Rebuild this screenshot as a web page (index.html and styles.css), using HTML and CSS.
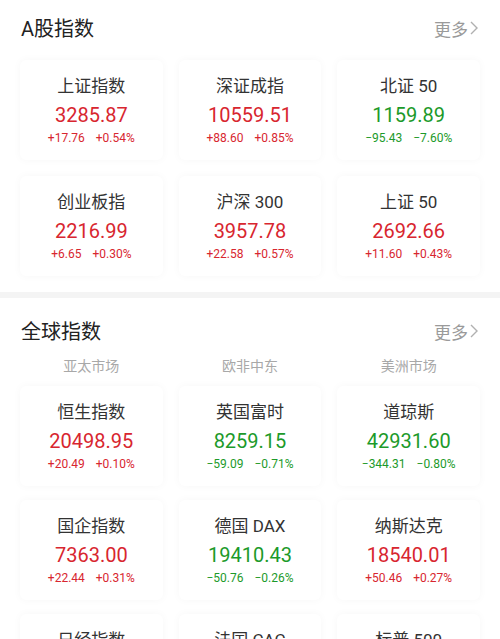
FILE: index.html
```html
<!DOCTYPE html>
<html lang="zh-CN">
<head>
<meta charset="utf-8">
<title>指数</title>
<link rel="stylesheet" href="styles.css">
</head>
<body>
<section class="block">
  <div class="head">
    <h2 class="title">A股指数</h2>
    <a class="more">更多<svg class="chev" viewBox="0 0 8 14" width="8" height="14"><path d="M1 1 L7 7 L1 13" fill="none" stroke="#b0b0b0" stroke-width="1.4"/></svg></a>
  </div>
  <div class="grid">
    <div class="card up"><div class="name">上证指数</div><div class="val">3285.87</div><div class="chg"><span>+17.76</span><span>+0.54%</span></div></div>
    <div class="card up"><div class="name">深证成指</div><div class="val">10559.51</div><div class="chg"><span>+88.60</span><span>+0.85%</span></div></div>
    <div class="card down"><div class="name">北证 50</div><div class="val">1159.89</div><div class="chg"><span>−95.43</span><span>−7.60%</span></div></div>
    <div class="card up"><div class="name">创业板指</div><div class="val">2216.99</div><div class="chg"><span>+6.65</span><span>+0.30%</span></div></div>
    <div class="card up"><div class="name">沪深 300</div><div class="val">3957.78</div><div class="chg"><span>+22.58</span><span>+0.57%</span></div></div>
    <div class="card up"><div class="name">上证 50</div><div class="val">2692.66</div><div class="chg"><span>+11.60</span><span>+0.43%</span></div></div>
  </div>
</section>
<div class="sep"></div>
<section class="block second">
  <div class="head">
    <h2 class="title">全球指数</h2>
    <a class="more">更多<svg class="chev" viewBox="0 0 8 14" width="8" height="14"><path d="M1 1 L7 7 L1 13" fill="none" stroke="#b0b0b0" stroke-width="1.4"/></svg></a>
  </div>
  <div class="cols">
    <div class="col">亚太市场</div>
    <div class="col">欧非中东</div>
    <div class="col">美洲市场</div>
  </div>
  <div class="grid grid2">
    <div class="card up"><div class="name">恒生指数</div><div class="val">20498.95</div><div class="chg"><span>+20.49</span><span>+0.10%</span></div></div>
    <div class="card down"><div class="name">英国富时</div><div class="val">8259.15</div><div class="chg"><span>−59.09</span><span>−0.71%</span></div></div>
    <div class="card down"><div class="name">道琼斯</div><div class="val">42931.60</div><div class="chg"><span>−344.31</span><span>−0.80%</span></div></div>
    <div class="card up"><div class="name">国企指数</div><div class="val">7363.00</div><div class="chg"><span>+22.44</span><span>+0.31%</span></div></div>
    <div class="card down"><div class="name">德国 DAX</div><div class="val">19410.43</div><div class="chg"><span>−50.76</span><span>−0.26%</span></div></div>
    <div class="card up"><div class="name">纳斯达克</div><div class="val">18540.01</div><div class="chg"><span>+50.46</span><span>+0.27%</span></div></div>
    <div class="card"><div class="name">日经指数</div></div>
    <div class="card"><div class="name">法国 CAC</div></div>
    <div class="card"><div class="name">标普 500</div></div>
  </div>
</section>
</body>
</html>
```
FILE: styles.css
```css
html, body {
  margin: 0;
  padding: 0;
  background: #ffffff;
  font-family: Roboto, "Noto Sans CJK SC", "Noto Sans", sans-serif;
  overflow: hidden;
}
.block {
  padding: 10px 20px 16px;
}
.block.second {
  padding-top: 15px;
}
.head {
  display: flex;
  justify-content: space-between;
  align-items: center;
  height: 34px;
  margin-bottom: 16px;
}
.second .head {
  margin-bottom: 9px;
}
.title {
  margin: 0;
  font-size: 20px;
  font-weight: 400;
  color: #222;
  padding-left: 1px;
}
.more {
  display: flex;
  align-items: center;
  gap: 2px;
  font-size: 17px;
  color: #9a9a9a;
  padding-top: 2px;
  margin-right: 2px;
}
.chev {
  display: block;
}
.grid {
  display: grid;
  grid-template-columns: repeat(3, 1fr);
  gap: 16px;
}
.grid2 {
  row-gap: 14px;
}
.cols {
  display: grid;
  grid-template-columns: repeat(3, 1fr);
  gap: 16px;
  height: 20px;
  margin-bottom: 10px;
}
.col {
  text-align: center;
  font-size: 14px;
  line-height: 20px;
  color: #a8a8a8;
}
.card {
  height: 100px;
  background: #fff;
  border-radius: 6px;
  box-shadow: 0 0 8px rgba(0, 0, 0, 0.035);
  display: flex;
  flex-direction: column;
  align-items: center;
  padding-top: 14px;
  box-sizing: border-box;
}
.name {
  font-size: 17px;
  line-height: 24px;
  color: #333;
}
.val {
  font-size: 20px;
  line-height: 28px;
  margin-top: 3px;
}
.chg {
  display: flex;
  gap: 11px;
  font-size: 12px;
  line-height: 18px;
}
.up .val, .up .chg { color: #d8262f; }
.down .val, .down .chg { color: #1c9a2a; }
.sep {
  height: 6px;
  background: #f4f4f4;
}
```
